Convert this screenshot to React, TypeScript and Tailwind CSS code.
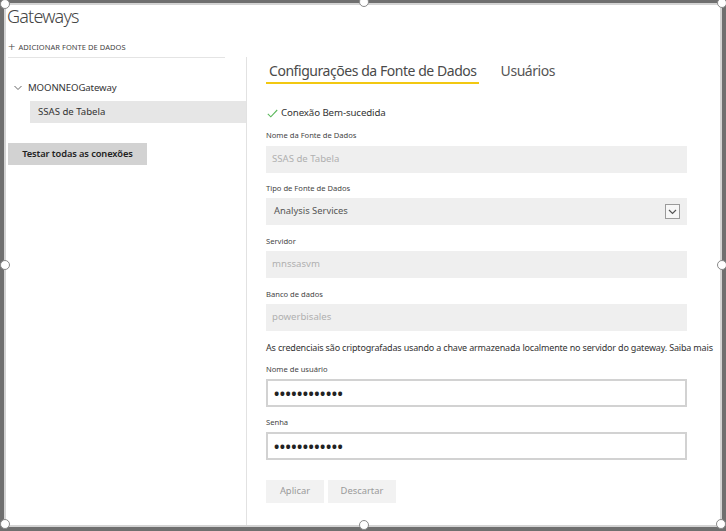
import React from "react";

const Handle = ({ x, y }: { x: number; y: number }) => (
  <div
    className="absolute w-[10px] h-[10px] rounded-full bg-white border-[1.5px] border-[#8a8a8a]"
    style={{ left: x - 5, top: y - 5 }}
  />
);

const Label = ({ children }: { children: React.ReactNode }) => (
  <div className="h-[12px] leading-[12px] text-[7.6px] text-[#444]">{children}</div>
);

const DisabledInput = ({ value }: { value: string }) => (
  <div className="w-[421px] h-[27px] bg-[#efefef] pl-[6px] flex items-center text-[9.6px] text-[#b0b0b0]">
    {value}
  </div>
);

const PasswordInput = () => (
  <div className="w-[421px] h-[28px] border-2 border-[#d2d2d2] bg-white pl-[6px] flex items-center text-[14px] font-bold text-[#222] tracking-[0.5px]">
    ••••••••••••
  </div>
);

export default function App() {
  return (
    <div className="relative w-[726px] h-[531px] bg-[#6f6f6f] pt-[3px] pl-[4px] pr-[4px] pb-[4px] font-[family-name:'Noto_Sans',sans-serif]">
      <div className="w-full h-full border-2 border-[#d4d4d4] bg-white flex flex-col">
        {/* header */}
        <div className="h-[24px] leading-[23px] pl-[1px] text-[18px] font-light text-[#444] tracking-[-0.8px]">
          Gateways
        </div>
        <div className="mt-[11px] h-[14px] flex items-center pl-[2px] text-[#444]">
          <span className="text-[13px] leading-[14px] font-light mr-[3px]">+</span>
          <span className="text-[7.5px] leading-[14px] tracking-[0.05px]">ADICIONAR FONTE DE DADOS</span>
        </div>
        <div className="mt-[3px] flex flex-1 min-h-0">
          {/* left column */}
          <div className="w-[241px] shrink-0 border-r border-[#e2e2e2] flex flex-col">
            <div className="ml-[2px] w-[217px] h-px bg-[#e4e4e4]" />
            <div className="mt-[20px] h-[20px] flex items-center pl-[8px] text-[#333]">
              <svg width="8" height="6" viewBox="0 0 8 6" className="mr-[6px]">
                <polyline points="0.5,1 4,4.5 7.5,1" fill="none" stroke="#666" strokeWidth="1" />
              </svg>
              <span className="text-[9.6px] tracking-[-0.1px]">MOONNEOGateway</span>
            </div>
            <div className="mt-[3px] ml-[24px] h-[22px] bg-[#e6e6e6] flex items-center pl-[8px] text-[9.6px] text-[#333]">
              SSAS de Tabela
            </div>
            <div className="mt-[20px] ml-[2px] w-[139px] h-[22px] bg-[#d2d2d2] flex items-center justify-center text-[9.3px] font-semibold text-[#222] tracking-[-0.1px]">
              Testar todas as conexões
            </div>
          </div>
          {/* right column */}
          <div className="flex-1 min-w-0 pl-[19px] flex flex-col">
            <div className="flex">
              <div className="h-[27px] pt-[2px] pl-[3px] pr-[2px] border-b-2 border-[#f2c811] text-[14px] leading-[23px] text-[#4a4a4a] tracking-[-0.45px]">
                Configurações da Fonte de Dados
              </div>
              <div className="ml-[22px] h-[27px] pt-[2px] text-[14px] leading-[23px] text-[#555] tracking-[-0.45px]">
                Usuários
              </div>
            </div>
            <div className="mt-[21px] h-[16px] flex items-center">
              <svg width="11" height="9" viewBox="0 0 11 9" className="ml-[1px] mr-[3px]">
                <polyline points="0.8,4.8 3.8,7.8 10.2,1" fill="none" stroke="#5cb85c" strokeWidth="1.1" />
              </svg>
              <span className="text-[9.7px] text-[#333] tracking-[-0.1px]">Conexão Bem-sucedida</span>
            </div>
            <div className="mt-[8px]">
              <Label>Nome da Fonte de Dados</Label>
            </div>
            <div className="mt-[5px]">
              <DisabledInput value="SSAS de Tabela" />
            </div>
            <div className="mt-[9px]">
              <Label>Tipo de Fonte de Dados</Label>
            </div>
            <div className="mt-[4px] w-[421px] h-[27px] bg-[#efefef] pl-[8px] pr-[7px] flex items-center justify-between">
              <span className="text-[9.4px] text-[#555]">Analysis Services</span>
              <div className="w-[15px] h-[15px] border border-[#9a9a9a] bg-[#f7f7f7] flex items-center justify-center">
                <svg width="9" height="6" viewBox="0 0 9 6">
                  <polyline points="1,1 4.5,4.5 8,1" fill="none" stroke="#555" strokeWidth="1.2" />
                </svg>
              </div>
            </div>
            <div className="mt-[10px]">
              <Label>Servidor</Label>
            </div>
            <div className="mt-[4px]">
              <DisabledInput value="mnssasvm" />
            </div>
            <div className="mt-[10px]">
              <Label>Banco de dados</Label>
            </div>
            <div className="mt-[4px]">
              <DisabledInput value="powerbisales" />
            </div>
            <div className="mt-[10px] h-[14px] leading-[14px] text-[9px] text-[#333] whitespace-nowrap tracking-[-0.17px]">
              As credenciais são criptografadas usando a chave armazenada localmente no servidor do gateway. Saiba mais
            </div>
            <div className="mt-[8px]">
              <Label>Nome de usuário</Label>
            </div>
            <div className="mt-[4px]">
              <PasswordInput />
            </div>
            <div className="mt-[9px]">
              <Label>Senha</Label>
            </div>
            <div className="mt-[4px]">
              <PasswordInput />
            </div>
            <div className="mt-[20px] flex gap-[4px]">
              <div className="w-[58px] h-[23px] bg-[#f2f2f2] flex items-center justify-center text-[9.4px] text-[#9a9a9a]">
                Aplicar
              </div>
              <div className="w-[68px] h-[23px] bg-[#f2f2f2] flex items-center justify-center text-[9.4px] text-[#9a9a9a]">
                Descartar
              </div>
            </div>
          </div>
        </div>
      </div>
      <Handle x={5} y={4} />
      <Handle x={364} y={2} />
      <Handle x={722} y={3} />
      <Handle x={5} y={265} />
      <Handle x={722} y={265} />
      <Handle x={5} y={524} />
      <Handle x={364} y={525} />
      <Handle x={721} y={524} />
    </div>
  );
}
